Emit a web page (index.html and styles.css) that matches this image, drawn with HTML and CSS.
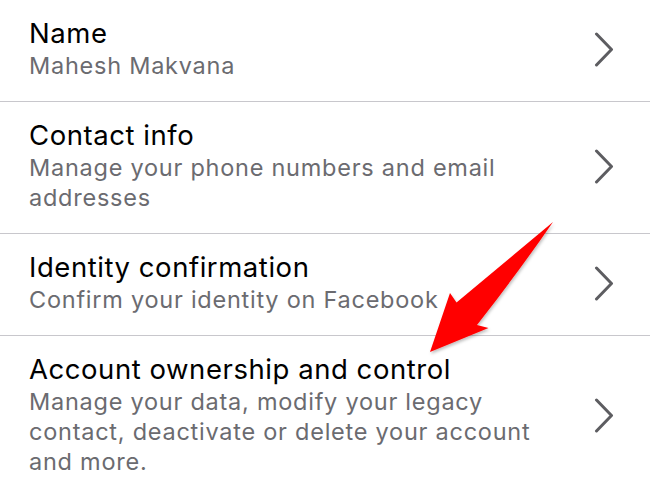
FILE: index.html
```html
<!DOCTYPE html>
<html>
<head>
<meta charset="utf-8">
<link rel="stylesheet" href="styles.css">
</head>
<body>
<div class="page">
  <ul class="list">
    <li class="row">
      <div class="text">
        <div class="title">Name</div>
        <div class="sub">Mahesh Makvana</div>
      </div>
      <svg class="chev" width="24" height="36" viewBox="0 0 24 36"><path d="M4.5 2 L19.5 17.5 L4.5 33" fill="none" stroke="#5d5d61" stroke-width="3" stroke-linecap="round" stroke-linejoin="round"/></svg>
    </li>
    <li class="row">
      <div class="text">
        <div class="title">Contact info</div>
        <div class="sub">Manage your phone numbers and email addresses</div>
      </div>
      <svg class="chev" width="24" height="36" viewBox="0 0 24 36"><path d="M4.5 2 L19.5 17.5 L4.5 33" fill="none" stroke="#5d5d61" stroke-width="3" stroke-linecap="round" stroke-linejoin="round"/></svg>
    </li>
    <li class="row">
      <div class="text">
        <div class="title">Identity confirmation</div>
        <div class="sub">Confirm your identity on Facebook</div>
      </div>
      <svg class="chev" width="24" height="36" viewBox="0 0 24 36"><path d="M4.5 2 L19.5 17.5 L4.5 33" fill="none" stroke="#5d5d61" stroke-width="3" stroke-linecap="round" stroke-linejoin="round"/></svg>
    </li>
    <li class="row">
      <div class="text">
        <div class="title">Account ownership and control</div>
        <div class="sub">Manage your data, modify your legacy contact, deactivate or delete your account and more.</div>
      </div>
      <svg class="chev" width="24" height="36" viewBox="0 0 24 36"><path d="M4.5 2 L19.5 17.5 L4.5 33" fill="none" stroke="#5d5d61" stroke-width="3" stroke-linecap="round" stroke-linejoin="round"/></svg>
    </li>
  </ul>
  <svg class="arrow" width="650" height="478" viewBox="0 0 650 478">
    <defs>
      <filter id="sh" x="-20%" y="-20%" width="140%" height="140%">
        <feDropShadow dx="1" dy="2" stdDeviation="1.5" flood-color="#000" flood-opacity="0.25"/>
      </filter>
    </defs>
    <path d="M553 222 L456.5 302.5 L450 293 L430 352 L488.5 328 L477 325 Q520 270 553 222 Z" fill="#ff0000" filter="url(#sh)"/>
  </svg>
</div>
</body>
</html>
```
FILE: styles.css
```css
html, body {
  margin: 0;
  padding: 0;
  background: #ffffff;
}
.page {
  position: relative;
  width: 650px;
  height: 478px;
  overflow: hidden;
  font-family: "Inter", "Liberation Sans", sans-serif;
}
.list {
  list-style: none;
  margin: 0;
  padding: 0;
}
.row {
  display: flex;
  align-items: center;
  padding: 17px 0 20px 29px;
  border-bottom: 1px solid #c8c7cc;
}
.text {
  flex: 1;
  max-width: 520px;
}
.title {
  font-size: 27.5px;
  letter-spacing: 0.55px;
  line-height: 32px;
  color: #000;
  margin-bottom: 2px;
}
.sub {
  font-size: 23.5px;
  letter-spacing: 0.75px;
  line-height: 30px;
  color: #6b6b70;
}
.chev {
  margin-left: auto;
  margin-right: 34px;
  flex: none;
  transform: translateY(1px);
}
.arrow {
  position: absolute;
  left: 0;
  top: 0;
  pointer-events: none;
}
```
